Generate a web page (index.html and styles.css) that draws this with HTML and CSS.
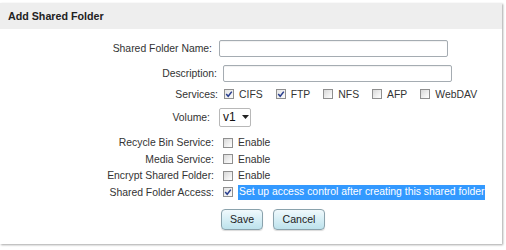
FILE: index.html
```html
<!DOCTYPE html>
<html>
<head>
<meta charset="utf-8">
<link rel="stylesheet" href="styles.css">
</head>
<body>
<div class="panel">
  <div class="header">Add Shared Folder</div>
  <div class="form">
    <div class="row r-name">
      <label class="lbl">Shared Folder Name:</label>
      <span class="txt w229"></span>
    </div>
    <div class="row r-desc">
      <label class="lbl">Description:</label>
      <span class="txt w229"></span>
    </div>
    <div class="row r-svc">
      <label class="lbl">Services:</label>
      <div class="opts">
        <span class="opt"><span class="cb on"><svg viewBox="0 0 10 10" width="10" height="10"><path d="M2.2 5 L4.2 7.3 L7.8 2.6" fill="none" stroke="#2a3f8f" stroke-width="1.5"/></svg></span>CIFS</span>
        <span class="opt"><span class="cb on"><svg viewBox="0 0 10 10" width="10" height="10"><path d="M2.2 5 L4.2 7.3 L7.8 2.6" fill="none" stroke="#2a3f8f" stroke-width="1.5"/></svg></span>FTP</span>
        <span class="opt"><span class="cb"></span>NFS</span>
        <span class="opt"><span class="cb"></span>AFP</span>
        <span class="opt"><span class="cb"></span>WebDAV</span>
      </div>
    </div>
    <div class="row r-vol">
      <label class="lbl">Volume:</label>
      <span class="sel">v1<svg class="arr" viewBox="0 0 7 4" width="7" height="4"><path d="M0 0 H7 L3.5 4 Z" fill="#222"/></svg></span>
    </div>
    <div class="row r-chk r-recycle">
      <label class="lbl">Recycle Bin Service:</label>
      <span class="opt"><span class="cb"></span>Enable</span>
    </div>
    <div class="row r-chk">
      <label class="lbl">Media Service:</label>
      <span class="opt"><span class="cb"></span>Enable</span>
    </div>
    <div class="row r-chk">
      <label class="lbl">Encrypt Shared Folder:</label>
      <span class="opt"><span class="cb"></span>Enable</span>
    </div>
    <div class="row r-chk">
      <label class="lbl">Shared Folder Access:</label>
      <span class="opt"><span class="cb on"><svg viewBox="0 0 10 10" width="10" height="10"><path d="M2.2 5 L4.2 7.3 L7.8 2.6" fill="none" stroke="#2a3f8f" stroke-width="1.5"/></svg></span><span class="hl">Set up access control after creating this shared folder</span></span>
    </div>
    <div class="buttons">
      <button class="btn save">Save</button>
      <button class="btn cancel">Cancel</button>
    </div>
  </div>
</div>
</body>
</html>
```

FILE: styles.css
```css
html, body {
  margin: 0;
  padding: 0;
  background: #fff;
}
body {
  width: 506px;
  height: 250px;
  font-family: "Liberation Sans", Arial, sans-serif;
  font-size: 10.4px;
  color: #333;
}
.panel {
  margin-top: 3px;
  width: 502px;
  height: 241px;
  background: #fff;
  box-shadow: 1px 1px 2px rgba(0,0,0,0.35);
}
.header {
  height: 26px;
  line-height: 26px;
  background: #eeeeee;
  padding-left: 8px;
  font-weight: bold;
  font-size: 10.7px;
  color: #222;
}
.form {
  padding-top: 8px;
}
.row {
  display: flex;
  align-items: center;
}
.lbl {
  width: var(--lw, 214px);
  text-align: right;
  margin-right: var(--gap, 8px);
  white-space: nowrap;
  flex: none;
}
.r-name { height: 23px; --lw: 212px; --gap: 7px; }
.r-desc { height: 24px; --lw: 217px; --gap: 6px; margin-top: 1px; }
.r-svc { height: 18px; --lw: 218px; --gap: 6px; }
.r-vol { height: 28px; --lw: 210px; --gap: 9px; }
.r-chk { height: 16.5px; --lw: 214px; --gap: 9px; }
.r-recycle { margin-top: 3px; height: 17px; }
.txt {
  display: block;
  height: 15px;
  border: 1px solid #a5acb2;
  border-radius: 2px;
  background: #fff;
  box-shadow: inset 0 1px 1px rgba(0,0,0,0.06);
}
.w229 { width: 227px; }
.opts {
  display: flex;
  align-items: center;
}
.opt {
  display: inline-flex;
  align-items: center;
  margin-right: 13px;
  white-space: nowrap;
}
.cb {
  display: inline-block;
  width: 8px;
  height: 8px;
  border: 1px solid #8f8f8f;
  background: linear-gradient(135deg, #d8d8d8 0%, #f4f4f4 70%, #ffffff 100%);
  margin-right: 5px;
  position: relative;
  flex: none;
}
.cb svg {
  position: absolute;
  left: -1px;
  top: -1px;
}
.cb.on {
  background: linear-gradient(135deg, #e4e4e4 0%, #fbfbfb 100%);
}
.sel {
  display: inline-flex;
  align-items: center;
  width: 27px;
  height: 17px;
  border: 1px solid #b8b8b8;
  border-radius: 2px;
  padding-left: 3px;
  font-size: 12px;
  color: #111;
  background: #fff;
}
.sel .arr {
  margin-left: 6px;
}
.hl {
  background: #3399ff;
  color: #fff;
  line-height: 14px;
  padding: 0 1px 1px 1px;
}
.buttons {
  display: flex;
  gap: 10px;
  padding-left: 221px;
  margin-top: 8px;
}
.btn {
  height: 21px;
  border: 1px solid #8aa2ac;
  border-radius: 4px;
  background: linear-gradient(to bottom, #f0f9fc 0%, #d6eef5 50%, #bde2ec 100%);
  font-family: "Liberation Sans", Arial, sans-serif;
  font-size: 10.6px;
  color: #222;
  padding: 0;
  box-shadow: 0 1px 1px rgba(0,0,0,0.15);
}
.save { width: 42px; }
.cancel { width: 52px; }
```
